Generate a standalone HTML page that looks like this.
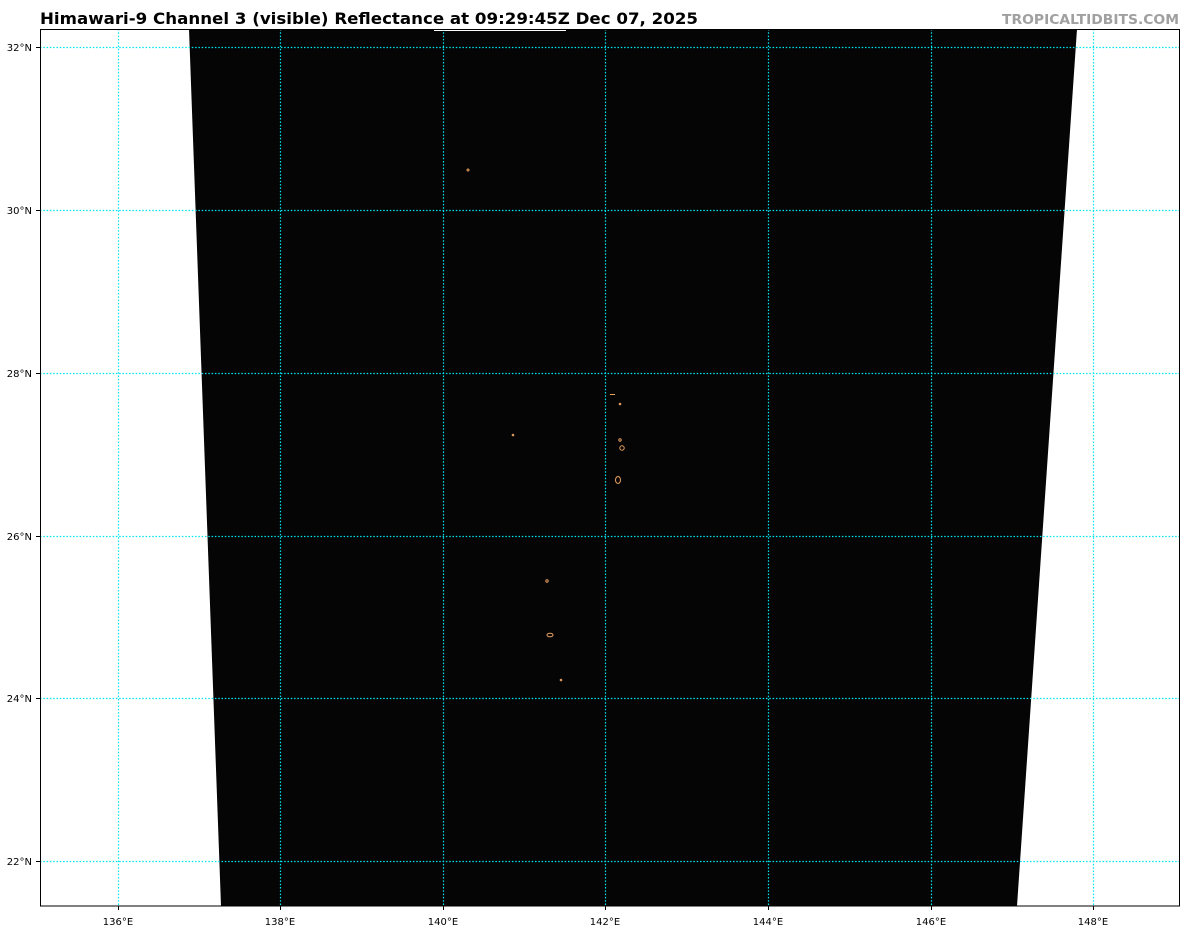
<!DOCTYPE html>
<html><head><style>body{margin:0;background:#fff;width:1200px;height:929px;overflow:hidden}</style></head>
<body>
<svg width="1200" height="929" xmlns="http://www.w3.org/2000/svg" font-family="DejaVu Sans, Liberation Sans, sans-serif">
<rect width="1200" height="929" fill="#fff"/>
<text x="40" y="24" font-size="16" font-weight="bold" fill="#000" textLength="658" lengthAdjust="spacingAndGlyphs">Himawari-9 Channel 3 (visible) Reflectance at 09:29:45Z Dec 07, 2025</text>
<text x="1002" y="24" font-size="13" font-weight="bold" fill="#a0a0a0" textLength="177" lengthAdjust="spacingAndGlyphs">TROPICALTIDBITS.COM</text>
<polygon points="189,29 1077,29 1017,906 221,906" fill="#050505"/>
<line x1="434" y1="30.5" x2="566" y2="30.5" stroke="#fff" stroke-width="1"/>
<g stroke="#00e5ee" stroke-width="1.2" stroke-dasharray="1.5,1.8">
<line x1="118.5" y1="29" x2="118.5" y2="906"/><line x1="280.5" y1="29" x2="280.5" y2="906"/>
<line x1="443.5" y1="29" x2="443.5" y2="906"/><line x1="605.5" y1="29" x2="605.5" y2="906"/>
<line x1="768.5" y1="29" x2="768.5" y2="906"/><line x1="931.5" y1="29" x2="931.5" y2="906"/>
<line x1="1093.5" y1="29" x2="1093.5" y2="906"/>
<line x1="40" y1="47.5" x2="1180" y2="47.5"/><line x1="40" y1="210.5" x2="1180" y2="210.5"/>
<line x1="40" y1="373.5" x2="1180" y2="373.5"/><line x1="40" y1="536.5" x2="1180" y2="536.5"/>
<line x1="40" y1="698.5" x2="1180" y2="698.5"/><line x1="40" y1="861.5" x2="1180" y2="861.5"/>
</g>
<g fill="none" stroke="#e8a060" stroke-width="1">
<circle cx="468" cy="170" r="1"/><circle cx="513" cy="435" r="0.8"/><line x1="610" y1="394.5" x2="615" y2="394.5"/>
<circle cx="620" cy="404" r="0.8"/><circle cx="620" cy="440" r="1.2"/><circle cx="622" cy="448" r="2.2"/>
<ellipse cx="618" cy="480" rx="2.5" ry="3.5"/><circle cx="547" cy="581" r="1.2"/><ellipse cx="550" cy="635" rx="3" ry="1.8"/>
<circle cx="561" cy="680" r="0.8"/>
</g>
<rect x="40.5" y="29.5" width="1139" height="876.5" fill="none" stroke="#000" stroke-width="1"/>
<g stroke="#000" stroke-width="1">
<line x1="36" y1="47.5" x2="40" y2="47.5"/><line x1="36" y1="210.5" x2="40" y2="210.5"/><line x1="36" y1="373.5" x2="40" y2="373.5"/>
<line x1="36" y1="536.5" x2="40" y2="536.5"/><line x1="36" y1="698.5" x2="40" y2="698.5"/><line x1="36" y1="861.5" x2="40" y2="861.5"/>
<line x1="118.5" y1="906" x2="118.5" y2="910"/><line x1="280.5" y1="906" x2="280.5" y2="910"/><line x1="443.5" y1="906" x2="443.5" y2="910"/>
<line x1="605.5" y1="906" x2="605.5" y2="910"/><line x1="768.5" y1="906" x2="768.5" y2="910"/><line x1="931.5" y1="906" x2="931.5" y2="910"/>
<line x1="1093.5" y1="906" x2="1093.5" y2="910"/>
</g>
<g font-size="10" fill="#000" text-anchor="end">
<text x="32" y="51">32°N</text><text x="32" y="214">30°N</text><text x="32" y="377">28°N</text>
<text x="32" y="540">26°N</text><text x="32" y="702">24°N</text><text x="32" y="865">22°N</text>
</g>
<g font-size="10" fill="#000" text-anchor="middle">
<text x="118" y="925">136°E</text><text x="280" y="925">138°E</text><text x="443" y="925">140°E</text>
<text x="605" y="925">142°E</text><text x="768" y="925">144°E</text><text x="931" y="925">146°E</text><text x="1093" y="925">148°E</text>
</g>
</svg>
</body></html>
